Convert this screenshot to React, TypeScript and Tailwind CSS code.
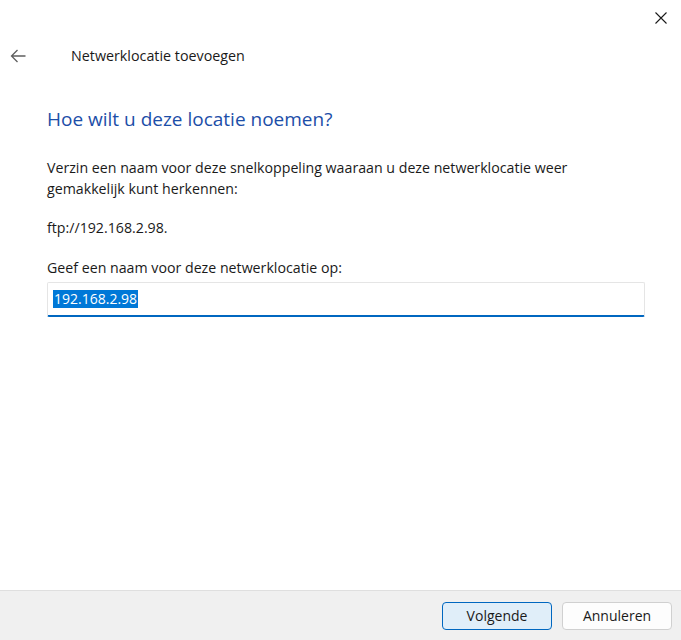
import React from "react";

const font = { fontFamily: '"Segoe UI", "Open Sans", "Noto Sans", sans-serif' };

export default function App() {
  return (
    <div
      className="w-[681px] h-[640px] bg-white flex flex-col text-[#1a1a1a] overflow-hidden"
      style={font}
    >
      {/* title bar */}
      <div className="h-[36px] flex justify-end">
        <button className="w-[46px] h-[36px] flex items-center justify-center mr-[-3px]">
          <svg width="12" height="12" viewBox="0 0 12 12">
            <path d="M0.5 0.5 L11.5 11.5 M11.5 0.5 L0.5 11.5" stroke="#1a1a1a" strokeWidth="1.1" />
          </svg>
        </button>
      </div>

      {/* header */}
      <div className="h-[40px] flex items-center">
        <button className="w-[34px] h-[34px] ml-[1px] flex items-center justify-center">
          <svg width="16" height="14" viewBox="0 0 16 14">
            <path d="M15.5 7 H1.5 M7.5 1 L1.5 7 L7.5 13" fill="none" stroke="#5f5f5f" strokeWidth="1.3" />
          </svg>
        </button>
        <span className="ml-[36px] text-[14.3px] mt-[-1px]">Netwerklocatie toevoegen</span>
      </div>

      {/* content */}
      <div className="flex-1 pl-[47px] pr-[36px]">
        <h1 className="mt-[29px] text-[19px] text-[#1c4ea8] leading-[28px]">
          Hoe wilt u deze locatie noemen?
        </h1>
        <p className="mt-[24px] text-[14.2px] leading-[21px] w-[570px]">
          Verzin een naam voor deze snelkoppeling waaraan u deze netwerklocatie weer gemakkelijk kunt herkennen:
        </p>
        <p className="mt-[18px] text-[14.2px] leading-[21px]">ftp://192.168.2.98.</p>
        <label className="block mt-[19px] text-[14.2px] leading-[21px]">
          Geef een naam voor deze netwerklocatie op:
        </label>
        <div className="mt-[4px] w-[598px] h-[35px] border border-[#e5e5e5] border-b-[2px] border-b-[#0067c0] rounded-[2px] bg-white flex items-center pl-[5px]">
          <span className="bg-[#0078d7] text-white text-[14px] leading-[18px] px-[1px]">192.168.2.98</span>
        </div>
      </div>

      {/* footer */}
      <div className="h-[50px] bg-[#f0f0f0] border-t border-[#dfdfdf] flex items-center justify-end gap-[10px] pr-[9px]">
        <button className="w-[110px] h-[28px] rounded-[4px] bg-[#e0eef9] border border-[#0067c0] text-[14px]">
          Volgende
        </button>
        <button className="w-[110px] h-[28px] rounded-[4px] bg-[#fdfdfd] border border-[#d0d0d0] text-[14px]">
          Annuleren
        </button>
      </div>
    </div>
  );
}
